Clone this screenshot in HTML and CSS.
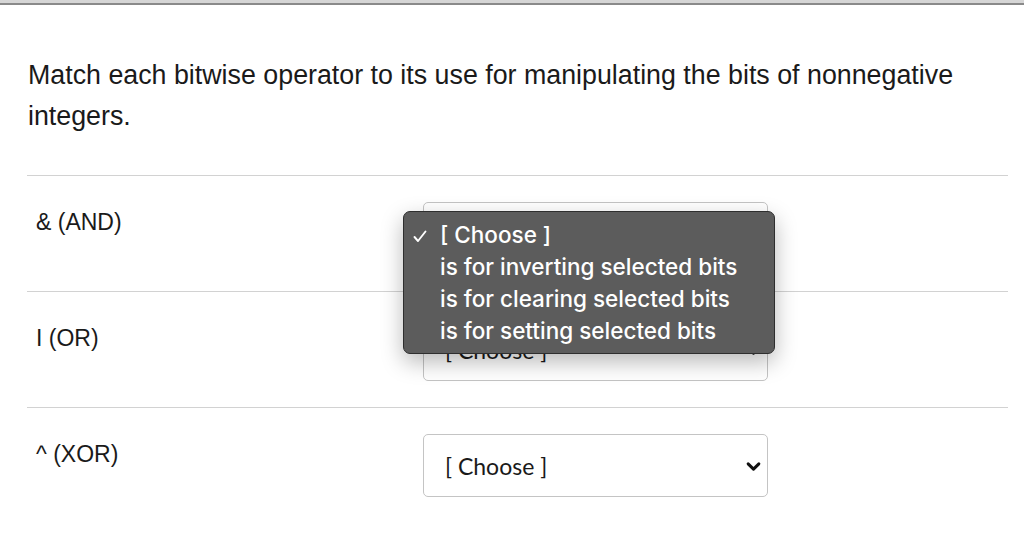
FILE: index.html
```html
<!DOCTYPE html>
<html lang="en">
<head>
  <meta charset="UTF-8" />
  <meta name="viewport" content="width=device-width, initial-scale=1.0" />
  <title>Matching Question</title>
  <link rel="stylesheet" href="styles.css">
</head>
<body>
  <div class="topbar"></div>

  <main class="question">
    <p class="prompt">Match each bitwise operator to its use for manipulating the bits of nonnegative integers.</p>

    <div class="answers">
      <div class="answer-row">
        <div class="answer-label">&amp; (AND)</div>
        <div class="select-wrap">
          <select class="answer-select">
            <option>[ Choose ]</option>
          </select>
          <svg class="chevron" viewBox="0 0 14 10" aria-hidden="true"><path d="M2 2.5 L7 7.5 L12 2.5" /></svg>

          <!-- open menu of the first select -->
          <ul class="menu">
            <li class="selected">
              <svg class="check" viewBox="0 0 14 13" aria-hidden="true"><path d="M1.5 7 L5 11 L12.5 1.5" /></svg>
              [ Choose ]
            </li>
            <li>is for inverting selected bits</li>
            <li>is for clearing selected bits</li>
            <li>is for setting selected bits</li>
          </ul>
        </div>
      </div>

      <div class="answer-row">
        <div class="answer-label">I (OR)</div>
        <div class="select-wrap">
          <select class="answer-select">
            <option>[ Choose ]</option>
          </select>
          <svg class="chevron" viewBox="0 0 14 10" aria-hidden="true"><path d="M2 2.5 L7 7.5 L12 2.5" /></svg>
        </div>
      </div>

      <div class="answer-row">
        <div class="answer-label">^ (XOR)</div>
        <div class="select-wrap">
          <select class="answer-select">
            <option>[ Choose ]</option>
          </select>
          <svg class="chevron" viewBox="0 0 14 10" aria-hidden="true"><path d="M2 2.5 L7 7.5 L12 2.5" /></svg>
        </div>
      </div>
    </div>
  </main>
</body>
</html>
```

FILE: styles.css
```css
body {
  margin: 0;
  font-family: 'Liberation Sans', Arial, Helvetica, sans-serif;
  background-color: #ffffff;
  color: #1a1a1a;
}

.topbar {
  height: 3px;
  background-color: #d6d6d6;
  border-bottom: 2px solid #8a8a8a;
}

.question {
  padding: 50px 16px 0 27px;
}

.prompt {
  margin: 0 0 38px 1px;
  font-size: 26.8px;
  line-height: 41px;
}

.answer-row {
  display: flex;
  height: 115px;
  border-top: 1px solid #d2d2d2;
}

.answer-label {
  width: 387px;
  padding: 32px 0 0 9px;
  font-size: 23px;
  line-height: 28px;
}

.select-wrap {
  position: relative;
  margin-top: 26px;
  width: 345px;
  height: 63px;
}

.answer-select {
  appearance: none;
  -webkit-appearance: none;
  width: 100%;
  height: 100%;
  margin: 0;
  padding: 0 0 0 21px;
  border: 1px solid #c4c4c4;
  border-radius: 5px;
  background-color: #ffffff;
  font-family: Lato, 'Open Sans', sans-serif;
  font-size: 23px;
  color: #1a1a1a;
}

.chevron {
  position: absolute;
  right: 7px;
  top: 27px;
  width: 15px;
  height: 11px;
  pointer-events: none;
}

.chevron path {
  fill: none;
  stroke: #111111;
  stroke-width: 2.8;
  stroke-linecap: round;
  stroke-linejoin: round;
}

.menu {
  position: absolute;
  left: -20px;
  top: 9px;
  width: 370px;
  margin: 0;
  padding: 7px 0 6px;
  list-style: none;
  background-color: #5c5c5c;
  border: 1px solid #2e2e2e;
  border-radius: 7px;
  box-shadow: 0 8px 22px rgba(0, 0, 0, 0.28);
  z-index: 2;
}

.menu li {
  position: relative;
  padding-left: 36px;
  font-family: Inter, 'Noto Sans', sans-serif;
  font-weight: 500;
  font-size: 22.5px;
  line-height: 32px;
  color: #ffffff;
}

.check {
  position: absolute;
  left: 9px;
  top: 11px;
  width: 14px;
  height: 13px;
}

.check path {
  fill: none;
  stroke: #ffffff;
  stroke-width: 1.9;
  stroke-linecap: round;
  stroke-linejoin: round;
}
```
